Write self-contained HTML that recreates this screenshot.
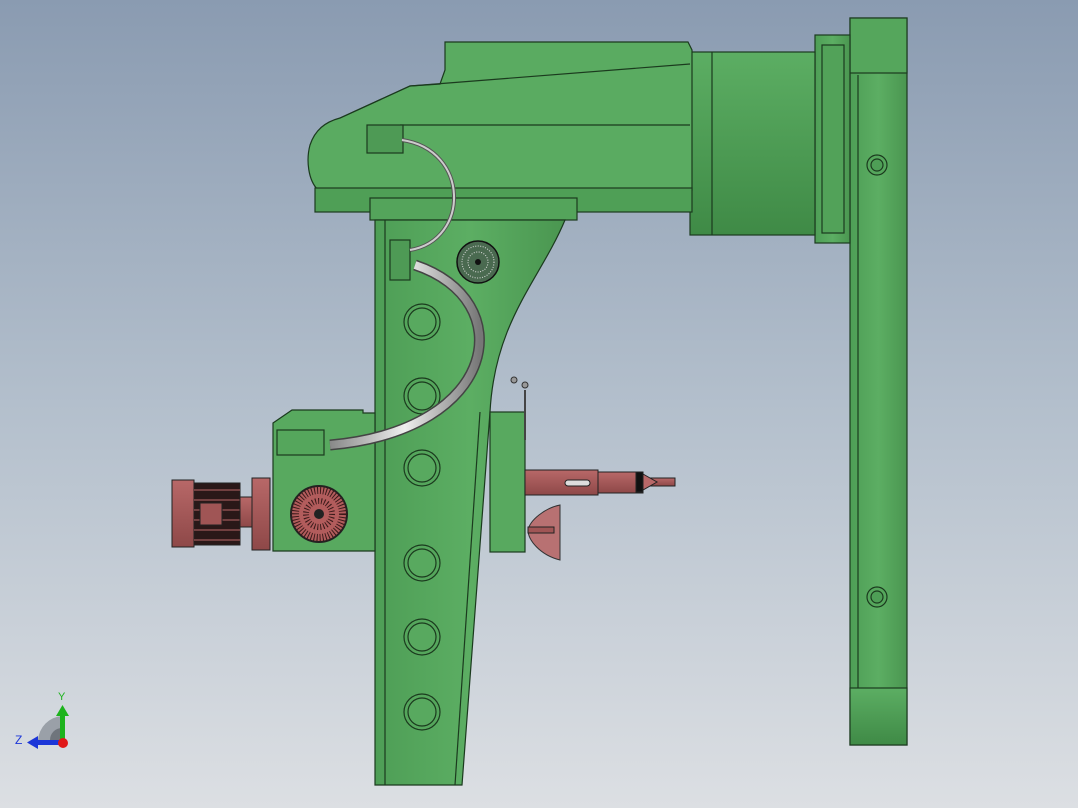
<!DOCTYPE html>
<html><head><meta charset="utf-8"><style>
html,body{margin:0;padding:0;width:1078px;height:808px;overflow:hidden}
body{background:linear-gradient(#8a9bb1,#b3bfcc 50%,#dcdfe3)}
svg{position:absolute;left:0;top:0}
text{font-family:"Liberation Sans",sans-serif}
</style></head><body>
<svg width="1078" height="808" viewBox="0 0 1078 808">
<defs>
<linearGradient id="g" x1="0" x2="1"><stop offset="0" stop-color="#4e9e56"/><stop offset=".5" stop-color="#5cae63"/><stop offset="1" stop-color="#4a9650"/></linearGradient>
<linearGradient id="gv" x1="0" y1="0" x2="0" y2="1"><stop offset="0" stop-color="#5cae63"/><stop offset="1" stop-color="#3f8a46"/></linearGradient>
<linearGradient id="r" x1="0" y1="0" x2="0" y2="1"><stop offset="0" stop-color="#b86868"/><stop offset="1" stop-color="#8e4848"/></linearGradient>
<linearGradient id="pipe" x1="0" x2="1"><stop offset="0" stop-color="#888"/><stop offset=".5" stop-color="#eee"/><stop offset="1" stop-color="#777"/></linearGradient>
</defs>
<g stroke="#1b3a1e" stroke-width="1.2">
<rect x="850" y="18" width="57" height="727" fill="url(#g)"/>
<rect x="850" y="18" width="57" height="55" fill="#55a65c"/>
<rect x="850" y="688" width="57" height="57" fill="url(#gv)"/>
<line x1="858" y1="75" x2="858" y2="688"/>
<circle cx="877" cy="165" r="10" fill="#55a65c"/><circle cx="877" cy="165" r="6" fill="#4e9e56"/>
<circle cx="877" cy="597" r="10" fill="#55a65c"/><circle cx="877" cy="597" r="6" fill="#4e9e56"/>
<rect x="815" y="35" width="35" height="208" fill="url(#g)"/>
<rect x="822" y="45" width="22" height="188" fill="#52a259"/>
<rect x="690" y="52" width="125" height="183" fill="url(#gv)"/>
<line x1="712" y1="52" x2="712" y2="235"/>
<path d="M445,42 L688,42 L692,50 L692,190 L318,190 C308,180 306,160 310,145 C315,130 325,122 340,118 L410,86 L440,84 L445,70 Z" fill="#5aab61"/>
<path d="M340,118 L410,86 L690,64" fill="none"/>
<line x1="400" y1="125" x2="690" y2="125"/>
<rect x="315" y="188" width="377" height="24" fill="#4f9f56"/>
<rect x="370" y="198" width="207" height="22" fill="#54a45b"/>
<rect x="367" y="125" width="36" height="28" fill="#4e9a55"/>
<path d="M375,220 L565,220 C540,280 495,320 490,412 L462,785 L375,785 Z" fill="url(#g)"/>
<line x1="385" y1="220" x2="385" y2="785"/>
<line x1="480" y1="412" x2="455" y2="785"/>
<g fill="#55a65c">
<circle cx="422" cy="322" r="18"/><circle cx="422" cy="396" r="18"/><circle cx="422" cy="468" r="18"/>
<circle cx="422" cy="563" r="18"/><circle cx="422" cy="637" r="18"/><circle cx="422" cy="712" r="18"/>
</g>
<g fill="#58a95f">
<circle cx="422" cy="322" r="14"/><circle cx="422" cy="396" r="14"/><circle cx="422" cy="468" r="14"/>
<circle cx="422" cy="563" r="14"/><circle cx="422" cy="637" r="14"/><circle cx="422" cy="712" r="14"/>
</g>
<rect x="390" y="240" width="20" height="40" fill="#4e9a55"/>
<path d="M273,423 L292,410 L363,410 L363,413 L375,413 L375,551 L273,551 Z" fill="#58a95f"/>
<rect x="277" y="430" width="47" height="25" fill="#55a65c"/>
<rect x="490" y="412" width="35" height="140" fill="#58a95f"/>
</g>
<circle cx="478" cy="262" r="21" fill="#4a6a50" stroke="#111" stroke-width="1.5"/>
<circle cx="478" cy="262" r="16" fill="none" stroke="#ddd" stroke-width="1" stroke-dasharray="1 1.5"/>
<circle cx="478" cy="262" r="10" fill="none" stroke="#ddd" stroke-width="1" stroke-dasharray="1 1.5"/>
<circle cx="478" cy="262" r="3" fill="#111"/>
<path d="M402,140 C470,150 470,240 410,250" fill="none" stroke="#555" stroke-width="4"/>
<path d="M402,140 C470,150 470,240 410,250" fill="none" stroke="#ccc" stroke-width="2"/>
<path d="M415,265 C520,300 500,430 330,445" fill="none" stroke="#444" stroke-width="11"/>
<path d="M415,265 C520,300 500,430 330,445" fill="none" stroke="url(#pipe)" stroke-width="8"/>
<circle cx="319" cy="514" r="28" fill="#b25c5c" stroke="#222" stroke-width="2"/>
<circle cx="319" cy="514" r="24" fill="none" stroke="#3a1a1a" stroke-width="8" stroke-dasharray="1 2"/>
<circle cx="319" cy="514" r="13" fill="none" stroke="#3a1a1a" stroke-width="6" stroke-dasharray="1 2"/>
<circle cx="319" cy="514" r="5" fill="#222"/>
<g stroke="#222" stroke-width="1">
<rect x="172" y="480" width="22" height="67" fill="url(#r)"/>
<rect x="194" y="483" width="46" height="62" fill="#2a1818"/>
<g stroke="#b86868"><line x1="194" y1="490" x2="240" y2="490"/><line x1="194" y1="500" x2="240" y2="500"/><line x1="194" y1="510" x2="240" y2="510"/><line x1="194" y1="520" x2="240" y2="520"/><line x1="194" y1="530" x2="240" y2="530"/><line x1="194" y1="540" x2="240" y2="540"/></g>
<rect x="200" y="503" width="22" height="22" fill="#a05555"/>
<rect x="240" y="497" width="20" height="30" fill="url(#r)"/>
<rect x="252" y="478" width="18" height="72" fill="url(#r)"/>
<rect x="525" y="470" width="73" height="25" fill="url(#r)"/>
<rect x="598" y="472" width="45" height="21" fill="url(#r)"/>
<rect x="565" y="480" width="25" height="6" rx="3" fill="#ddd"/>
<rect x="643" y="478" width="32" height="8" fill="url(#r)"/>
<rect x="636" y="472" width="7" height="20" fill="#111"/>
<path d="M643,474 L657,482 L643,490 Z" fill="#b86868"/>
<path d="M560,505 L560,560 C540,555 528,540 528,530 C530,520 545,508 560,505 Z" fill="#b86868" opacity=".9"/>
<rect x="528" y="527" width="26" height="6" fill="#a05555"/>
</g>
<line x1="525" y1="390" x2="525" y2="440" stroke="#444" stroke-width="2"/>
<circle cx="514" cy="380" r="3" fill="#999" stroke="#333"/><circle cx="525" cy="385" r="3" fill="#999" stroke="#333"/>
<path d="M38,740 A26,26 0 0 1 62,716 L62,740 Z" fill="#9aa0a8"/>
<path d="M50,740 A12,12 0 0 1 62,728 L62,740 Z" fill="#6f757c"/>
<rect x="60" y="714" width="5" height="28" fill="#1db31d"/>
<path d="M56,716 L62.5,705 L69,716 Z" fill="#1db31d"/>
<rect x="36" y="740" width="26" height="5" fill="#1c36d8"/>
<path d="M38,736 L27,742.5 L38,749 Z" fill="#1c36d8"/>
<circle cx="63" cy="743" r="5" fill="#e01818"/>
<text x="58" y="700" font-size="11" fill="#1db31d">Y</text>
<text x="15" y="744" font-size="12" fill="#1c36d8">Z</text>
</svg>
</body></html>
